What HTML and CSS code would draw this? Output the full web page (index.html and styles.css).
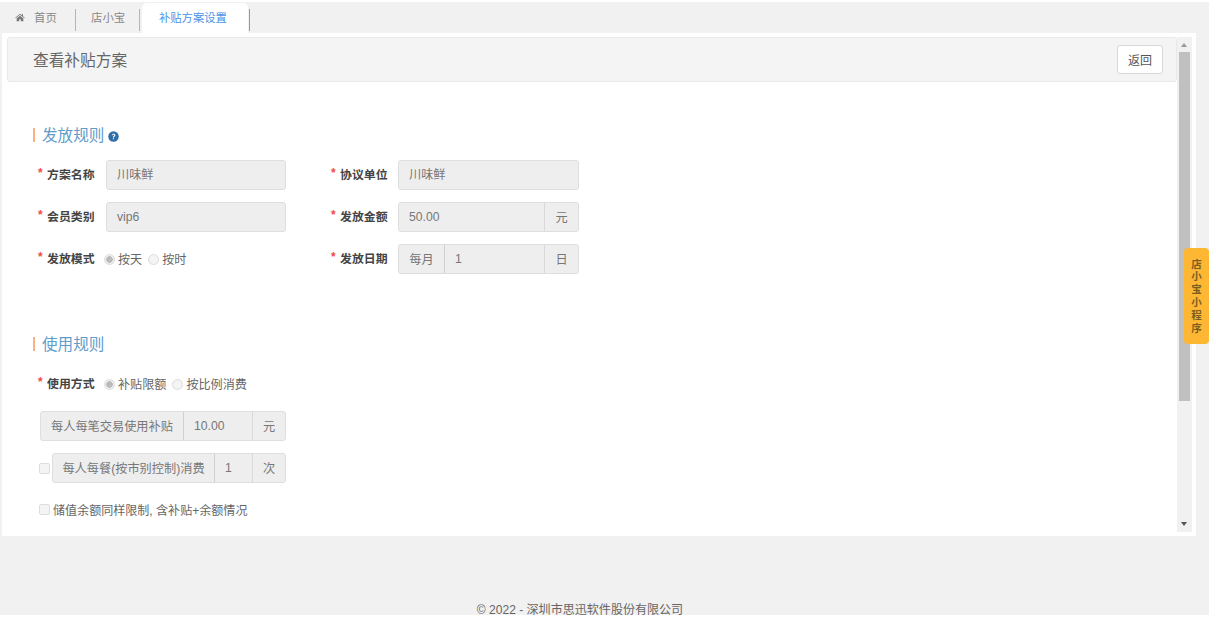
FILE: index.html
```html
<!DOCTYPE html>
<html lang="zh-CN">
<head>
<meta charset="utf-8">
<title>查看补贴方案</title>
<link rel="stylesheet" href="styles.css">
</head>
<body>
<div class="page">
  <nav class="tabs">
    <a class="tab tab-home">
      <svg class="home-icon" viewBox="0 0 12 10" width="10" height="9"><path d="M6 0.5 0.3 5.3l.6.7L6 1.8 11.1 6l.6-.7L9.6 3.5V1H8.2v1.3zM2 6.2V9.6h3V7h2v2.6h3V6.2L6 2.9z" fill="#777"/></svg>
      <span>首页</span>
    </a>
    <a class="tab tab-shop">店小宝</a>
    <a class="tab tab-active">补贴方案设置</a>
    <i class="tab-end"></i>
  </nav>
  <main class="panel">
    <div class="content">
      <header class="head">
        <h1>查看补贴方案</h1>
        <button class="back">返回</button>
      </header>

      <h2 class="sec sec-first">发放规则
        <svg class="help" viewBox="0 0 12 12" width="11" height="11"><circle cx="6" cy="6" r="5.7" fill="#2f6da6"/><path d="M4.1 4.7C4.2 3.6 5 3 6.1 3c1.1 0 2 .7 2 1.6 0 1.5-1.6 1.4-1.6 2.5H5.3c0-1.7 1.5-1.6 1.5-2.5 0-.4-.3-.7-.8-.7-.5 0-.7.3-.8.8zM5.3 7.8h1.3V9H5.3z" fill="#fff"/></svg>
      </h2>

      <div class="row">
        <div class="field">
          <label class="lbl">方案名称</label>
          <div class="group w-left"><span class="ctl grow">川味鲜</span></div>
        </div>
        <div class="field field-r">
          <label class="lbl">协议单位</label>
          <div class="group w-right"><span class="ctl grow">川味鲜</span></div>
        </div>
      </div>
      <div class="row">
        <div class="field">
          <label class="lbl">会员类别</label>
          <div class="group w-left"><span class="ctl ctl-num grow">vip6</span></div>
        </div>
        <div class="field field-r">
          <label class="lbl">发放金额</label>
          <div class="group w-right"><span class="ctl ctl-num grow">50.00</span><span class="addon a-unit">元</span></div>
        </div>
      </div>
      <div class="row">
        <div class="field">
          <label class="lbl">发放模式</label>
          <div class="radios">
            <span class="radio on"></span><span class="rt">按天</span>
            <span class="radio"></span><span class="rt">按时</span>
          </div>
        </div>
        <div class="field field-r">
          <label class="lbl">发放日期</label>
          <div class="group w-right"><span class="addon a-month">每月</span><span class="ctl ctl-num grow">1</span><span class="addon a-unit">日</span></div>
        </div>
      </div>

      <h2 class="sec sec-second">使用规则</h2>

      <div class="field field-use">
        <label class="lbl">使用方式</label>
        <div class="radios">
          <span class="radio on"></span><span class="rt">补贴限额</span>
          <span class="radio"></span><span class="rt">按比例消费</span>
        </div>
      </div>

      <div class="group w-limit limit-one">
        <span class="addon a-long">每人每笔交易使用补贴</span><span class="ctl ctl-num grow">10.00</span><span class="addon a-unit2">元</span>
      </div>
      <div class="check-row">
        <span class="check"></span>
        <div class="group w-limit2">
          <span class="addon a-long2">每人每餐(按市别控制)消费</span><span class="ctl ctl-num grow">1</span><span class="addon a-unit2">次</span>
        </div>
      </div>
      <div class="check-line">
        <span class="check"></span><span class="rt rt-note">储值余额同样限制, 含补贴+余额情况</span>
      </div>
    </div>
    <div class="scrollbar">
      <span class="arrow up"></span>
      <div class="track"><div class="thumb"></div></div>
      <span class="arrow down"></span>
    </div>
  </main>
  <footer class="foot">© 2022 - 深圳市思迅软件股份有限公司</footer>
  <div class="float-tab">店小宝小程序</div>
</div>
</body>
</html>
```
FILE: styles.css
```css
* { box-sizing: border-box; }
html, body { margin: 0; padding: 0; height: 100%; background: #fff; overflow: hidden; }
body { font-family: "Liberation Sans", "Noto Sans CJK SC", sans-serif; color: #666; font-size: 12px; }

.page {
  position: relative;
  width: 1209px;
  height: 613px;
  margin-top: 2px;
  background: #f1f1f1;
  display: flex;
  flex-direction: column;
}

.tabs { display: flex; align-items: flex-end; height: 31px; padding-left: 15px; flex: none; }
.tab { display: flex; align-items: center; font-size: 11.4px; color: #888; white-space: nowrap; }
.tab-home { width: 61px; gap: 9px; border-right: 1px solid #b5b5b5; height: 22px; margin-bottom: 2px; padding-bottom: 6px; }
.tab-shop { width: 64px; padding-left: 15px; padding-bottom: 6px; border-right: 1px solid #b5b5b5; height: 22px; margin-bottom: 2px; }
.tab-active { width: 106px; height: 30px; margin-left: 2px; padding-left: 17px; padding-bottom: 2px; background: #fff; color: #4b92e6; border-radius: 5px 5px 0 0; font-size: 11.3px; }
.tab-end { width: 1px; height: 22px; margin: 0 0 2px 1px; background: #9a9a9a; }
.home-icon { flex: none; }

.panel {
  flex: none;
  display: flex;
  width: 1194px;
  height: 503px;
  margin-left: 2px;
  padding: 4px 4px 4px 5px;
  background: #fff;
}
.content { width: 1170px; flex: none; }

.head {
  display: flex;
  align-items: center;
  justify-content: space-between;
  height: 45px;
  padding: 0 13px 0 25px;
  background: #f4f4f4;
  border: 1px solid #e9e9e9;
  border-radius: 3px;
}
.head h1 { margin: 0; font-size: 15.7px; font-weight: 400; color: #666; }
.back {
  width: 46px;
  height: 29px;
  padding: 0;
  background: #fff;
  border: 1px solid #d8d8d8;
  border-radius: 3px;
  font: inherit;
  color: #555;
}

.sec {
  display: flex;
  align-items: center;
  gap: 4px;
  height: 14px;
  margin: 0 0 0 26px;
  padding-left: 7px;
  padding-bottom: 2px;
  border-left: 2px solid #fbb083;
  font-size: 15.6px;
  font-weight: 400;
  color: #5f9cc9;
}
.sec-first { margin-top: 46px; margin-bottom: 18px; }
.sec-second { margin-top: 63px; margin-bottom: 22px; }
.help { flex: none; margin-top: 4px; }

.row { display: flex; height: 30px; margin-bottom: 12px; }
.field { display: flex; align-items: center; flex: none; width: 298px; padding-left: 31px; }
.field-r { padding-left: 26px; width: 300px; }
.field-use { height: 20px; margin-bottom: 18px; padding-top: 2px; }

.lbl { display: block; flex: none; width: 68px; padding-left: 9px; padding-bottom: 4px; position: relative; font-weight: 700; font-size: 11.9px; color: #444; white-space: nowrap; }
.lbl::before { content: "*"; position: absolute; left: 0; top: 1px; color: #f04a4a; font-weight: 700; }

.group {
  display: flex;
  flex: none;
  height: 30px;
  background: #eee;
  border: 1.5px solid #dedede;
  border-radius: 3px;
  font-size: 12.2px;
  color: #777;
}
.w-left { width: 180px; }
.w-right { width: 181px; margin-left: -1px; }
.ctl { display: flex; align-items: center; padding-left: 10px; padding-bottom: 2px; white-space: nowrap; }
.ctl-num { padding-bottom: 0; }
.grow { flex: 1; min-width: 0; }
.addon { display: flex; align-items: center; justify-content: center; flex: none; white-space: nowrap; padding-bottom: 1px; }
.a-unit { width: 34px; border-left: 1px solid #d8d8d8; }
.a-month { width: 46px; border-right: 1.5px solid #d0d0d0; }
.a-unit2 { width: 33px; border-left: 1px solid #d8d8d8; }

.radios { display: flex; align-items: center; margin-left: -2px; }
.radio { width: 11px; height: 11px; border: 1px solid #ddd; border-radius: 50%; background: #f4f4f4; display: block; margin-right: 3px; flex: none; }
.radio.on { background: radial-gradient(circle, #bbb 0 3px, #eee 3.5px); }
.rt { font-size: 12.1px; color: #666; white-space: nowrap; margin-right: 6px; padding-bottom: 2px; }
.rt-note { font-size: 12.05px; padding-bottom: 0; }

.limit-one { margin-left: 33px; width: 246px; }
.w-limit2 { width: 234px; }
.a-long { width: 143px; border-right: 1.5px solid #d0d0d0; }
.a-long2 { width: 162px; border-right: 1.5px solid #d0d0d0; }
.check-row { display: flex; align-items: center; gap: 2px; margin: 12px 0 0 32px; }
.check { width: 11px; height: 11px; background: #f4f4f4; border: 1px solid #ddd; border-radius: 2px; flex: none; }
.check-line { display: flex; align-items: center; gap: 3px; margin: 19px 0 0 32px; height: 14px; }

.scrollbar { width: 15px; background: #f1f1f1; display: flex; flex-direction: column; flex: none; }
.track { flex: 1; width: 100%; padding: 0 2px; }
.thumb { height: 349px; background: #c0c0c0; }
.arrow { height: 15px; width: 100%; position: relative; flex: none; }
.arrow::after { content: ""; position: absolute; left: 4px; border-left: 3.5px solid transparent; border-right: 3.5px solid transparent; }
.arrow.up::after { top: 6px; border-bottom: 4px solid #999; }
.arrow.down::after { top: 5px; border-top: 4px solid #555; }

.foot { margin-top: 68px; height: 12px; line-height: 12px; text-align: center; width: 1160px; font-size: 12.05px; color: #666; white-space: nowrap; }

.float-tab {
  position: absolute;
  left: 1184px;
  top: 246px;
  width: 25px;
  height: 96px;
  padding: 0 7px;
  display: flex;
  align-items: center;
  background: #fdb733;
  border-radius: 4px;
  font-size: 10.5px;
  line-height: 12.8px;
  font-weight: 700;
  color: #7a5f22;
  text-align: center;
}
```
